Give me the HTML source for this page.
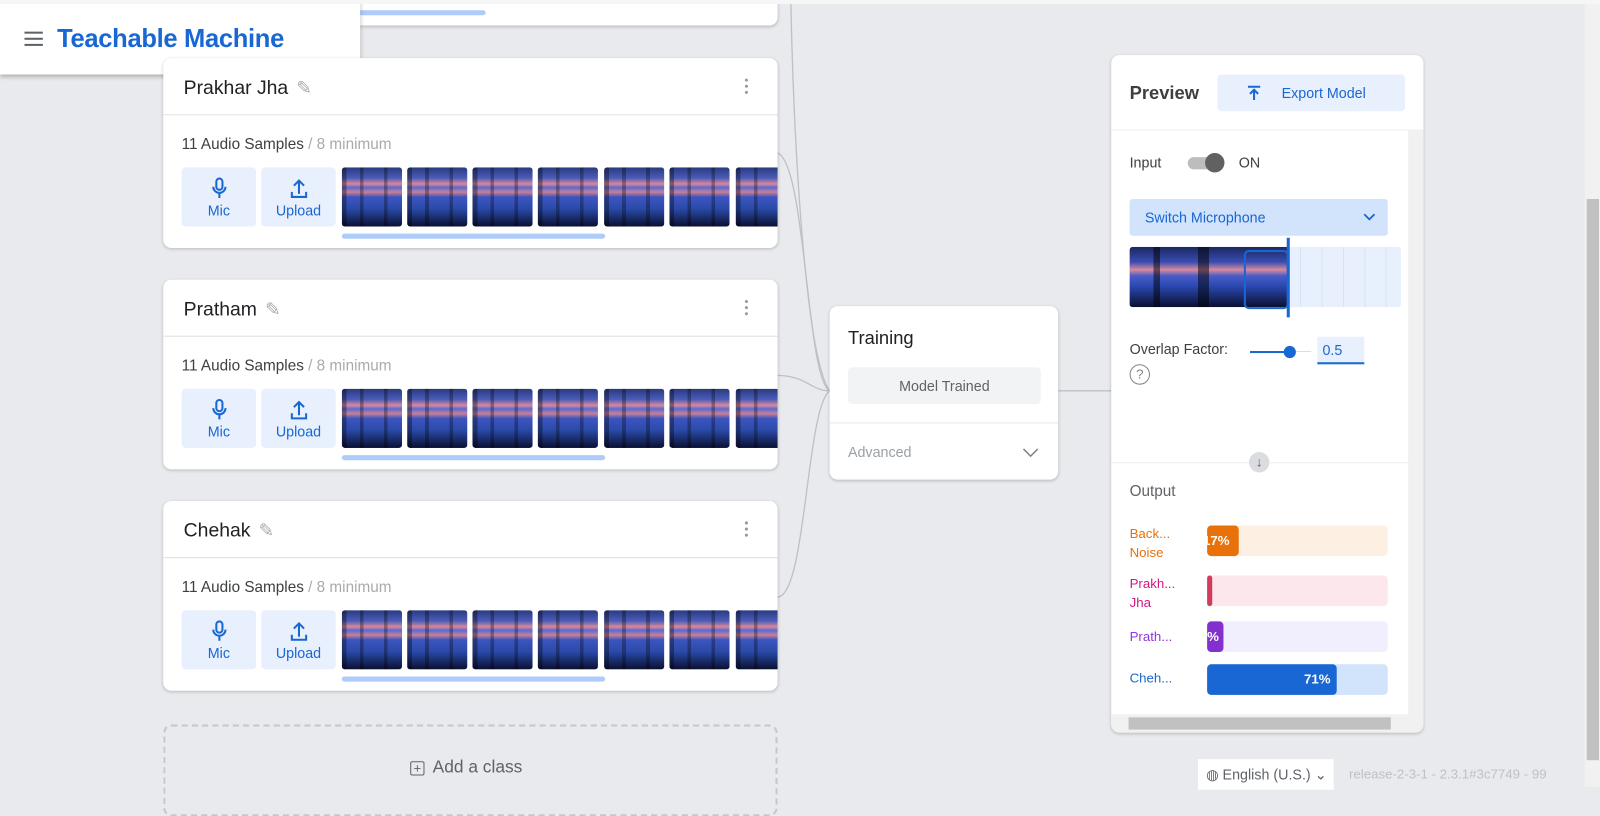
<!DOCTYPE html>
<html><head><style>
*{box-sizing:border-box;margin:0;padding:0}
html,body{width:1600px;height:786px;overflow:hidden;background:#e8eaed}
#w{position:absolute;left:0;top:0;width:1568px;height:771px;transform:scale(1.0204);transform-origin:0 0;font-family:"Liberation Sans",sans-serif;color:#202124}
.abs{position:absolute}
.card{position:absolute;background:#fff;border-radius:8px;box-shadow:0 1px 3px rgba(0,0,0,.2)}
.cls{left:160px;width:602px;height:186px;overflow:hidden}
.cls .hd{height:56px;border-bottom:1px solid #e0e0e0;padding:19px 20px;font-size:19px;color:#202124}
.cls .hd .pen{color:#aaa;font-size:18px;margin-left:8px}
.cls .dots{position:absolute;right:28px;top:20px;width:4px}
.cls .dots i{display:block;width:3px;height:3px;background:#999;border-radius:50%;margin-bottom:3px}
.cls .cnt{position:absolute;left:18px;top:76px;font-size:15px;color:#3c4043}
.cls .cnt span{color:#aaa}
.btn{position:absolute;top:107px;height:58px;background:#e8f0fe;border-radius:4px;color:#1967d2;font-size:14px;text-align:center;padding-top:34px}
.btn svg{position:absolute;top:10px;left:50%;margin-left:-9px}
.th{position:absolute;top:107px;width:59px;height:58px;border-radius:3px;background:
linear-gradient(90deg,rgba(0,0,0,.35) 0 8%,transparent 8% 30%,rgba(0,0,0,.3) 30% 36%,transparent 36% 70%,rgba(0,0,0,.3) 70% 76%,transparent 76%),
linear-gradient(180deg,#2a3a80 0%,#4a5cb8 18%,#d8889a 28%,#5a6ad0 34%,#c98096 42%,#3d55c0 50%,#2a4aa8 70%,#0a1030 100%)}
.sb{position:absolute;top:172px;left:175px;width:258px;height:5px;background:#aecbfa;border-radius:3px}
</style></head><body><div id="w">

<svg class="abs" style="left:0;top:0" width="1568" height="771">
<g stroke="#bdc1c6" stroke-width="1.3" fill="none">
<path d="M775 0 C778 150 790 350 813 383"/>
<path d="M762 150 C790 160 790 370 813 383"/>
<path d="M762 368 C790 368 795 383 813 383"/>
<path d="M762 585 C790 585 790 400 813 383"/>
<path d="M1037 383 L1089 383"/>
</g></svg>

<div class="card" style="left:160px;top:-20px;width:602px;height:45px;overflow:hidden">
<div style="position:absolute;left:190px;top:30px;width:126px;height:5px;background:#aecbfa;border-radius:3px"></div>
<div style="position:absolute;left:175px;top:20px;width:440px;height:3px;background:repeating-linear-gradient(90deg,#555 0 58px,transparent 58px 64px)"></div>
</div>

<div class="card" style="left:0;top:-8px;width:353px;height:81px;border-radius:0 0 8px 0;box-shadow:0 2px 4px rgba(0,0,0,.25)">
<div class="abs" style="left:24px;top:39px;width:18px">
<div style="height:2px;background:#5f6368;margin-bottom:4px"></div><div style="height:2px;background:#5f6368;margin-bottom:4px"></div><div style="height:2px;background:#5f6368"></div></div>
<div class="abs" style="left:56px;top:32px;font-size:25px;font-weight:bold;color:#1967d2;letter-spacing:-.3px">Teachable Machine</div>
</div>

<div class="card cls" style="top:57px">
<div class="hd">Prakhar Jha<span class="pen">✎</span></div>
<div class="dots"><i></i><i></i><i></i></div>
<div class="cnt">11 Audio Samples <span>/ 8 minimum</span></div>
<div class="btn" style="left:18px;width:73px"><svg width="18" height="22" viewBox="0 0 18 22"><rect x="6" y="1" width="6" height="11" rx="3" fill="none" stroke="#1967d2" stroke-width="2"/><path d="M3 9a6 6 0 0 0 12 0M9 15v5" stroke="#1967d2" stroke-width="2" fill="none"/></svg>Mic</div>
<div class="btn" style="left:96px;width:73px"><svg width="18" height="22" viewBox="0 0 18 22"><path d="M9 16V3M4 8l5-5 5 5M2 14v5h14v-5" stroke="#1967d2" stroke-width="2" fill="none"/></svg>Upload</div>
<div class="th" style="left:175px"></div><div class="th" style="left:239px"></div><div class="th" style="left:303px"></div><div class="th" style="left:367px"></div><div class="th" style="left:432px"></div><div class="th" style="left:496px"></div><div class="th" style="left:561px"></div>
<div class="sb"></div>
</div>

<div class="card cls" style="top:274px">
<div class="hd">Pratham<span class="pen">✎</span></div>
<div class="dots"><i></i><i></i><i></i></div>
<div class="cnt">11 Audio Samples <span>/ 8 minimum</span></div>
<div class="btn" style="left:18px;width:73px"><svg width="18" height="22" viewBox="0 0 18 22"><rect x="6" y="1" width="6" height="11" rx="3" fill="none" stroke="#1967d2" stroke-width="2"/><path d="M3 9a6 6 0 0 0 12 0M9 15v5" stroke="#1967d2" stroke-width="2" fill="none"/></svg>Mic</div>
<div class="btn" style="left:96px;width:73px"><svg width="18" height="22" viewBox="0 0 18 22"><path d="M9 16V3M4 8l5-5 5 5M2 14v5h14v-5" stroke="#1967d2" stroke-width="2" fill="none"/></svg>Upload</div>
<div class="th" style="left:175px"></div><div class="th" style="left:239px"></div><div class="th" style="left:303px"></div><div class="th" style="left:367px"></div><div class="th" style="left:432px"></div><div class="th" style="left:496px"></div><div class="th" style="left:561px"></div>
<div class="sb"></div>
</div>

<div class="card cls" style="top:491px">
<div class="hd">Chehak<span class="pen">✎</span></div>
<div class="dots"><i></i><i></i><i></i></div>
<div class="cnt">11 Audio Samples <span>/ 8 minimum</span></div>
<div class="btn" style="left:18px;width:73px"><svg width="18" height="22" viewBox="0 0 18 22"><rect x="6" y="1" width="6" height="11" rx="3" fill="none" stroke="#1967d2" stroke-width="2"/><path d="M3 9a6 6 0 0 0 12 0M9 15v5" stroke="#1967d2" stroke-width="2" fill="none"/></svg>Mic</div>
<div class="btn" style="left:96px;width:73px"><svg width="18" height="22" viewBox="0 0 18 22"><path d="M9 16V3M4 8l5-5 5 5M2 14v5h14v-5" stroke="#1967d2" stroke-width="2" fill="none"/></svg>Upload</div>
<div class="th" style="left:175px"></div><div class="th" style="left:239px"></div><div class="th" style="left:303px"></div><div class="th" style="left:367px"></div><div class="th" style="left:432px"></div><div class="th" style="left:496px"></div><div class="th" style="left:561px"></div>
<div class="sb"></div>
</div>

<div class="abs" style="left:160px;top:710px;width:602px;height:90px;border:2px dashed #c4c7cc;border-radius:8px">
<div class="abs" style="left:240px;top:30px;font-size:17px;color:#5f6368"><span style="display:inline-block;width:14px;height:14px;border:1.5px solid #5f6368;border-radius:2px;text-align:center;line-height:11px;font-size:13px;vertical-align:0;margin-right:8px">+</span>Add a class</div>
</div>

<div class="card" style="left:813px;top:300px;width:224px;height:170px">
<div class="abs" style="left:18px;top:21px;font-size:18px">Training</div>
<div class="abs" style="left:18px;top:60px;width:189px;height:36px;background:#f1f3f4;border-radius:4px;text-align:center;line-height:36px;font-size:14px;color:#5f6368">Model Trained</div>
<div class="abs" style="left:0;top:114px;width:224px;height:1px;background:#e8e8e8"></div>
<div class="abs" style="left:18px;top:135px;font-size:14px;color:#9aa0a6">Advanced</div>
<svg class="abs" style="left:188px;top:137px" width="18" height="12"><path d="M2 3l7 7 7-7" stroke="#80868b" stroke-width="1.5" fill="none"/></svg>
</div>

<div class="card" style="left:1089px;top:54px;width:306px;height:664px;overflow:hidden">
<div class="abs" style="left:18px;top:27px;font-size:18px;font-weight:bold;color:#3c4043">Preview</div>
<div class="abs" style="left:104px;top:19px;width:184px;height:36px;background:#e8f0fe;border-radius:4px;color:#1967d2;font-size:14px;line-height:36px;padding-left:63px">Export Model</div>
<svg class="abs" style="left:131px;top:28px" width="18" height="18"><path d="M3 3h12M9 16V6M5 10l4-4 4 4" stroke="#1967d2" stroke-width="2" fill="none"/></svg>
<div class="abs" style="left:0;top:73px;width:306px;height:1px;background:#eee"></div>
<div class="abs" style="left:291px;top:74px;width:15px;height:573px;background:#f1f1f1"></div>
<div class="abs" style="left:0;top:646px;width:306px;height:18px;background:#f1f1f1"></div>
<div class="abs" style="left:17px;top:649px;width:257px;height:12px;background:#c1c1c1"></div>
<div class="abs" style="left:18px;top:97px;font-size:14px;color:#3c4043">Input</div>
<div class="abs" style="left:75px;top:100px;width:34px;height:12px;background:#bdbdbd;border-radius:6px"></div>
<div class="abs" style="left:92px;top:96px;width:19px;height:19px;background:#616161;border-radius:50%"></div>
<div class="abs" style="left:125px;top:97px;font-size:14px;color:#3c4043">ON</div>
<div class="abs" style="left:18px;top:141px;width:253px;height:36px;background:#d2e3fc;border-radius:3px;color:#1967d2;font-size:14px;line-height:36px;padding-left:15px">Switch Microphone</div>
<svg class="abs" style="left:246px;top:154px" width="14" height="10"><path d="M2 2l5 5 5-5" stroke="#1967d2" stroke-width="1.8" fill="none"/></svg>
<div class="abs" style="left:18px;top:188px;width:266px;height:59px;background:repeating-linear-gradient(90deg,#e8f0fe 0 20px,#d6e2f6 20px 21px);border-radius:3px"></div>
<div class="abs" style="left:18px;top:188px;width:156px;height:59px;border-radius:3px 0 0 3px;background:
linear-gradient(90deg,transparent 0 15%,rgba(0,0,0,.5) 15% 19%,transparent 19% 43%,rgba(0,0,0,.5) 43% 50%,transparent 50%),
linear-gradient(180deg,#1a2860 0%,#3a4cb0 25%,#d88a9c 38%,#4a5cc8 48%,#2a48b0 65%,#0a1030 100%)"></div>
<div class="abs" style="left:130px;top:191px;width:44px;height:58px;border:2px solid #1967d2;border-radius:5px"></div>
<div class="abs" style="left:172px;top:179px;width:3px;height:78px;background:#1967d2"></div>
<div class="abs" style="left:18px;top:280px;font-size:14px;color:#3c4043">Overlap Factor:</div>
<div class="abs" style="left:136px;top:290px;width:40px;height:2px;background:#1967d2"></div>
<div class="abs" style="left:176px;top:290px;width:20px;height:1px;background:#ddd"></div>
<div class="abs" style="left:169px;top:285px;width:12px;height:12px;background:#1967d2;border-radius:50%"></div>
<div class="abs" style="left:202px;top:276px;width:46px;height:27px;background:#e8f0fe;border-bottom:2px solid #1967d2;color:#1967d2;font-size:14px;padding:5px 0 0 5px">0.5</div>
<div class="abs" style="left:18px;top:303px;width:20px;height:20px;border:1.5px solid #80868b;border-radius:50%;text-align:center;font-size:13px;line-height:17px;color:#80868b">?</div>
<div class="abs" style="left:0;top:399px;width:291px;height:1px;background:#eee"></div>
<div class="abs" style="left:135px;top:389px;width:20px;height:20px;background:#dadce0;border-radius:50%;text-align:center;font-size:13px;line-height:20px;color:#5f6368">↓</div>
<div class="abs" style="left:18px;top:419px;font-size:15px;color:#5f6368">Output</div>
<div class="abs" style="left:18px;top:459px;font-size:13px;line-height:19px;color:#e8710a">Back...<br>Noise</div>
<div class="abs" style="left:94px;top:461px;width:177px;height:30px;background:#feefe3;border-radius:4px"></div>
<div class="abs" style="left:94px;top:461px;width:31px;height:30px;background:#e8710a;border-radius:4px;color:#fff;font-size:13px;font-weight:bold;line-height:30px;overflow:hidden;text-indent:-4px">17%</div>
<div class="abs" style="left:18px;top:508px;font-size:13px;line-height:19px;color:#d01884">Prakh...<br>Jha</div>
<div class="abs" style="left:94px;top:510px;width:177px;height:30px;background:#fce8ec;border-radius:4px"></div>
<div class="abs" style="left:94px;top:510px;width:5px;height:30px;background:#d33b5c;border-radius:3px"></div>
<div class="abs" style="left:18px;top:562px;font-size:13px;color:#9334e6">Prath...</div>
<div class="abs" style="left:94px;top:555px;width:177px;height:30px;background:#f1eefd;border-radius:4px"></div>
<div class="abs" style="left:94px;top:555px;width:16px;height:30px;background:#8430ce;border-radius:4px;color:#fff;font-size:13px;font-weight:bold;line-height:30px;overflow:hidden">%</div>
<div class="abs" style="left:18px;top:603px;font-size:13px;color:#1967d2">Cheh...</div>
<div class="abs" style="left:94px;top:597px;width:177px;height:30px;background:#d2e3fc;border-radius:4px"></div>
<div class="abs" style="left:94px;top:597px;width:127px;height:30px;background:#1967d2;border-radius:4px;color:#fff;font-size:13px;font-weight:bold;line-height:30px;text-align:right;padding-right:6px">71%</div>
</div>

<div class="abs" style="left:1174px;top:744px;width:133px;height:30px;background:#fff;font-size:14px;color:#5f6368;line-height:30px;padding-left:8px">◍ English (U.S.) ⌄</div>
<div class="abs" style="left:1322px;top:751px;font-size:13px;color:#bdc1c6">release-2-3-1 - 2.3.1#3c7749 - 99</div>

<div class="abs" style="left:1553px;top:0;width:15px;height:771px;background:#f1f1f1"></div>
<div class="abs" style="left:1555px;top:195px;width:12px;height:550px;background:#c1c1c1"></div>
<div class="abs" style="left:0;top:0;width:1568px;height:4px;background:#f6f6f6"></div>
</div></body></html>
